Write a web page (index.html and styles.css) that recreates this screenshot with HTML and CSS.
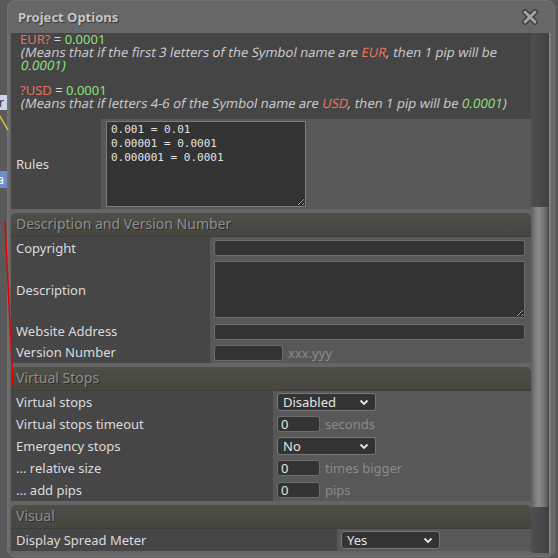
FILE: index.html
```html
<!DOCTYPE html>
<html lang="en">
<head>
  <meta charset="UTF-8">
  <meta name="viewport" content="width=device-width, initial-scale=1.0">
  <title>Project Options</title>
  <link rel="stylesheet" href="styles.css">
</head>
<body>
  <!-- bits of the chart canvas that sit behind the dialog -->
  <div class="node node-or">Color</div>
  <div class="node node-ra">Extra</div>
  <svg class="wires" width="558" height="558" viewBox="0 0 558 558">
    <line x1="-2" y1="113" x2="8" y2="130" stroke="#d8c040" stroke-width="1.5"/>
    <line x1="5" y1="222" x2="13" y2="386" stroke="#e80000" stroke-width="1.5"/>
  </svg>

  <div class="dialog">
    <div class="titlebar">
      <span class="title">Project Options</span>
      <svg class="close" width="16" height="16" viewBox="0 0 16 16">
        <path d="M3 3 L13 13 M13 3 L3 13" stroke="#3a3a3a" stroke-width="5.5" stroke-linecap="round"/>
        <path d="M3 3 L13 13 M13 3 L3 13" stroke="#a4a4a4" stroke-width="3" stroke-linecap="round"/>
      </svg>
    </div>

    <div class="dialog-body">
      <div class="pane">
        <div class="help">
          <div><span class="sym">EUR?</span> = <span class="num">0.0001</span></div>
          <div class="note">(Means that if the first 3 letters of the Symbol name are <span class="sym">EUR</span>, then 1 pip will be</div>
          <div class="note"><span class="num">0.0001)</span></div>
          <div class="blank"></div>
          <div><span class="sym">?USD</span> = <span class="num">0.0001</span></div>
          <div class="note">(Means that if letters 4-6 of the Symbol name are <span class="sym">USD</span>, then 1 pip will be <span class="num">0.0001</span>)</div>
        </div>

        <div class="row rules-row">
          <div class="label">Rules</div>
          <div class="value">
            <textarea class="rules-box" spellcheck="false">0.001 = 0.01
0.00001 = 0.0001
0.000001 = 0.0001</textarea>
          </div>
        </div>

        <section class="group group-desc">
          <h2>Description and Version Number</h2>
          <div class="row">
            <div class="label">Copyright</div>
            <div class="value"><input class="field wide" type="text"></div>
          </div>
          <div class="row tall">
            <div class="label">Description</div>
            <div class="value"><textarea class="desc-box"></textarea></div>
          </div>
          <div class="row tight">
            <div class="label">Website Address</div>
            <div class="value"><input class="field wide" type="text"></div>
          </div>
          <div class="row tight">
            <div class="label">Version Number</div>
            <div class="value"><input class="field version" type="text"><span class="unit">xxx.yyy</span></div>
          </div>
        </section>

        <section class="group group-stops">
          <h2>Virtual Stops</h2>
          <div class="row">
            <div class="label">Virtual stops</div>
            <div class="value">
              <div class="select"><span>Disabled</span><svg width="10" height="7" viewBox="0 0 10 7"><path d="M1.5 1.5 L5 5 L8.5 1.5" fill="none" stroke="#e6e6e6" stroke-width="1.8"/></svg></div>
            </div>
          </div>
          <div class="row">
            <div class="label">Virtual stops timeout</div>
            <div class="value"><input class="field small" type="text" value="0"><span class="unit">seconds</span></div>
          </div>
          <div class="row">
            <div class="label">Emergency stops</div>
            <div class="value">
              <div class="select"><span>No</span><svg width="10" height="7" viewBox="0 0 10 7"><path d="M1.5 1.5 L5 5 L8.5 1.5" fill="none" stroke="#e6e6e6" stroke-width="1.8"/></svg></div>
            </div>
          </div>
          <div class="row">
            <div class="label">... relative size</div>
            <div class="value"><input class="field small" type="text" value="0"><span class="unit">times bigger</span></div>
          </div>
          <div class="row">
            <div class="label">... add pips</div>
            <div class="value"><input class="field small" type="text" value="0"><span class="unit">pips</span></div>
          </div>
        </section>

        <section class="group group-visual">
          <h2>Visual</h2>
          <div class="row">
            <div class="label">Display Spread Meter</div>
            <div class="value">
              <div class="select"><span>Yes</span><svg width="10" height="7" viewBox="0 0 10 7"><path d="M1.5 1.5 L5 5 L8.5 1.5" fill="none" stroke="#e6e6e6" stroke-width="1.8"/></svg></div>
            </div>
          </div>
        </section>
      </div>

      <div class="scrollbar">
        <div class="thumb"></div>
      </div>
    </div>
  </div>
</body>
</html>
```

FILE: styles.css
```css
body {
  margin: 0;
  width: 558px;
  height: 558px;
  overflow: hidden;
  position: relative;
  background: #595959;
  font-family: "Noto Sans", "Open Sans", sans-serif;
  font-size: 13px;
  color: #dcdcdc;
}

/* canvas behind the dialog */
.node {
  position: absolute;
  padding: 0 3px;
  font-size: 12px;
  line-height: 15px;
  white-space: nowrap;
}

.node-or {
  top: 95px;
  right: 551px;
  background: #c9d6ef;
  color: #333;
}

.node-ra {
  top: 171px;
  right: 551px;
  height: 17px;
  line-height: 17px;
  background: #6f8dc8;
  color: #fff;
}

.wires {
  position: absolute;
  top: 0;
  left: 0;
  z-index: 5;
  pointer-events: none;
}

/* dialog window */
.dialog {
  box-sizing: border-box;
  width: 548px;
  height: 557px;
  margin-left: 7px;
  border: 1px solid #737373;
  border-radius: 8px;
  background: #676767;
  display: flex;
  flex-direction: column;
  overflow: hidden;
}

.titlebar {
  box-sizing: border-box;
  height: 32px;
  flex-shrink: 0;
  display: flex;
  align-items: center;
  justify-content: space-between;
  padding: 0 16px 1px 10px;
}

.title {
  font-weight: bold;
  font-size: 13px;
  color: #c6c6c6;
  text-shadow: 1px 1px 1px #383838;
}

.dialog-body {
  height: 520px;
  display: flex;
  padding: 0 6px 0 3px;
  background: linear-gradient(to right, #707070, #636363 3px, #636363 calc(100% - 6px), #3e3e3e calc(100% - 6px), #3e3e3e calc(100% - 5px), #8a8a8a calc(100% - 5px), #8a8a8a calc(100% - 4px), #676767 calc(100% - 3px));
}

.pane {
  flex: 1;
  overflow: hidden;
  background: #656565;
}

/* help text on top */
.help {
  height: 86px;
  box-sizing: border-box;
  padding: 0 6px 0 9px;
  background: #454545;
  line-height: 12.8px;
  color: #d6d6d6;
  white-space: nowrap;
}

/* the original draws these lines as slanted regular text */
.help .note {
  color: #c8c8cc;
  transform: skewX(-11deg);
  transform-origin: 0 100%;
}

.help .blank {
  height: 12.8px;
}

.sym {
  color: #e5735f;
}

.num {
  color: #90e07a;
}

/* rows */
.row {
  display: flex;
  height: 22px;
}

.row.tight {
  height: 21px;
}

.row.tall {
  height: 62px;
}

.label {
  width: var(--label-w, 90px);
  flex-shrink: 0;
  display: flex;
  align-items: center;
  padding: 0 0 1px 5px;
  box-sizing: border-box;
  background: #464646;
  white-space: nowrap;
}

.group-stops .label,
.group-visual .label {
  padding-bottom: 0;
}

.value {
  flex: 1;
  display: flex;
  align-items: center;
  padding: 0 6px 0 4px;
  background: #585858;
}

.rules-row {
  height: 90px;
}

.rules-row .value {
  align-items: flex-start;
  padding: 2px 0 0 5px;
}

.rules-box {
  box-sizing: border-box;
  width: 200px;
  height: 86px;
  margin: 0;
  padding: 1px 4px 0;
  border: 1px solid #7c7c7c;
  background: #333;
  color: #e2e2e2;
  font-family: "DejaVu Sans Mono", monospace;
  font-size: 11px;
  line-height: 14px;
  resize: both;
  color-scheme: dark;
}

/* groups */
.group {
  margin-top: 4px;
}

.group h2 {
  margin: 0;
  height: 24px;
  box-sizing: border-box;
  padding: 0 0 2px 5px;
  display: flex;
  align-items: center;
  font-size: 14px;
  font-weight: normal;
  color: #8e8e8e;
  text-shadow: 1px 1px 0 #2e2e2a;
  border-radius: 5px 5px 0 0;
  border-bottom: 1px solid #3d3d39;
  background: linear-gradient(#4f4f49, #46463f);
}

.group-desc {
  --label-w: 199px;
}

.group-stops {
  --label-w: 262px;
}

.group-visual {
  --label-w: 326px;
}

.field {
  box-sizing: border-box;
  height: 16px;
  margin: 0;
  padding: 0 3px;
  border: 1px solid #6c6c6c;
  border-radius: 3px;
  background: #333;
  color: #e4e4e4;
  font-family: "Noto Sans", sans-serif;
  font-size: 13px;
  outline: none;
}

.field.wide {
  flex: 1;
}

.field.version {
  width: 69px;
}

.field.small {
  width: 43px;
}

.desc-box {
  box-sizing: border-box;
  flex: 1;
  height: 57px;
  margin: -1px 0 0;
  border: 1px solid #6c6c6c;
  background: #333;
  color: #e4e4e4;
  resize: both;
  color-scheme: dark;
}

.unit {
  margin-left: 5px;
  color: #8a8a8a;
}

.select {
  box-sizing: border-box;
  width: 99px;
  height: 18px;
  display: flex;
  align-items: center;
  justify-content: space-between;
  padding: 0 6px 0 5px;
  border: 1px solid #767676;
  border-radius: 3px;
  background: #333;
  color: #e4e4e4;
}

/* scrollbar */
.scrollbar {
  width: 17px;
  flex-shrink: 0;
  box-sizing: border-box;
  padding-top: 174px;
  background: linear-gradient(to right, #4f4f4f, #474747 60%, #424242);
}

.thumb {
  height: 300px;
  background: linear-gradient(to right, #5e5e5e, #7c7c7c 25%, #8c8c8c 45%, #7a7a7a 70%, #585858);
}
```
